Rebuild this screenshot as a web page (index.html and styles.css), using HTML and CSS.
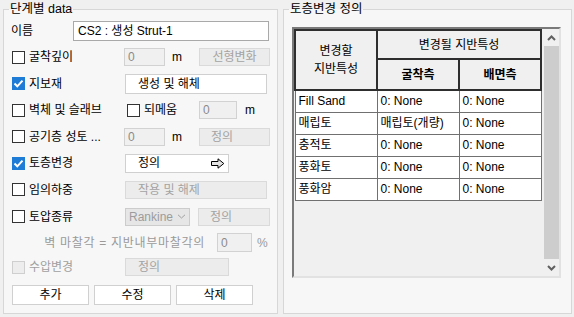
FILE: index.html
```html
<!DOCTYPE html>
<html lang="ko">
<head>
    <meta charset="UTF-8">
    <title>단계별 data</title>
    <link rel="stylesheet" href="styles.css">
</head>
<body>
    <div class="window">
        <fieldset class="group stage">
            <legend>단계별 data</legend>
            <div class="rows">
                <div class="row">
                    <span class="name-label">이름</span>
                    <span class="field name">CS2 : 생성 Strut-1</span>
                </div>
                <div class="row">
                    <span class="lead"><span class="check"></span>굴착깊이</span>
                    <span class="field off num">0</span>
                    <span class="unit">m</span>
                    <span class="btn off wide">선형변화</span>
                </div>
                <div class="row">
                    <span class="lead"><span class="check on"><svg viewBox="0 0 13 13"><polyline points="2.5,6.5 5.3,9.3 10.5,3.6"/></svg></span>지보재</span>
                    <span class="btn long tall left">생성 및 해체</span>
                </div>
                <div class="row">
                    <span class="lead"><span class="check"></span>벽체 및 슬래브</span>
                    <span class="lead2"><span class="check"></span>되메움</span>
                    <span class="field off small">0</span>
                    <span class="unit wide-gap">m</span>
                </div>
                <div class="row">
                    <span class="lead"><span class="check"></span>공기층 성토 ...</span>
                    <span class="field off num">0</span>
                    <span class="unit">m</span>
                    <span class="btn off wide left">정의</span>
                </div>
                <div class="row">
                    <span class="lead"><span class="check on"><svg viewBox="0 0 13 13"><polyline points="2.5,6.5 5.3,9.3 10.5,3.6"/></svg></span>토층변경</span>
                    <span class="btn mid left arrow-btn">정의
                        <svg class="arrow" viewBox="0 0 15 11"><path d="M1.5 3.5 H8 V0.8 L13.8 5.5 L8 10.2 V7.5 H1.5 Z"/></svg>
                    </span>
                </div>
                <div class="row">
                    <span class="lead"><span class="check"></span>임의하중</span>
                    <span class="btn off long left">작용 및 해제</span>
                </div>
                <div class="row">
                    <span class="lead"><span class="check"></span>토압종류</span>
                    <span class="select off">Rankine
                        <svg class="chev" viewBox="0 0 9 5"><polyline points="1,0.8 4.5,4 8,0.8"/></svg>
                    </span>
                    <span class="btn off wide left after-select">정의</span>
                </div>
                <div class="row">
                    <span class="note">벽 마찰각 = 지반내부마찰각의</span>
                    <span class="field off pct">0</span>
                    <span class="note-unit">%</span>
                </div>
                <div class="row">
                    <span class="lead dim"><span class="check off"></span>수압변경</span>
                    <span class="btn off mid left">정의</span>
                </div>
                <div class="row actions">
                    <span class="btn action">추가</span>
                    <span class="btn action">수정</span>
                    <span class="btn action">삭제</span>
                </div>
            </div>
        </fieldset>

        <fieldset class="group layer">
            <legend>토층변경 정의</legend>
            <div class="grid-box">
                <div class="grid-body">
                    <table class="layers">
                        <colgroup><col><col><col></colgroup>
                        <tr class="head1">
                            <th rowspan="2">변경할<br>지반특성</th>
                            <th colspan="2">변경될 지반특성</th>
                        </tr>
                        <tr class="head2">
                            <th class="bold">굴착측</th>
                            <th class="bold">배면측</th>
                        </tr>
                        <tr><td>Fill Sand</td><td>0: None</td><td>0: None</td></tr>
                        <tr><td>매립토</td><td>매립토(개량)</td><td>0: None</td></tr>
                        <tr><td>충적토</td><td>0: None</td><td>0: None</td></tr>
                        <tr><td>풍화토</td><td>0: None</td><td>0: None</td></tr>
                        <tr><td>풍화암</td><td>0: None</td><td>0: None</td></tr>
                    </table>
                </div>
                <div class="vscroll">
                    <span class="sb-arrow"><svg viewBox="0 0 9 6"><polyline points="1,5 4.5,1.5 8,5"/></svg></span>
                    <span class="sb-thumb"></span>
                    <span class="sb-arrow"><svg viewBox="0 0 9 6"><polyline points="1,1 4.5,4.5 8,1"/></svg></span>
                </div>
            </div>
        </fieldset>
    </div>
</body>
</html>
```

FILE: styles.css
```css
body {
    margin: 0;
    background: #f0f0f0;
    font-family: "Liberation Sans", "Noto Sans CJK KR", sans-serif;
    font-size: 12px;
    color: #000;
}

.window {
    display: flex;
    height: 317px;
}

.group {
    margin: 0;
    padding: 0 5px;
    height: 314px;
    box-sizing: border-box;
    border: 1px solid #d7d7d7;
    background: #f7f7f7;
    min-width: 0;
}

.group legend {
    padding: 0 1px;
    line-height: 18px;
    font-size: 12.5px;
}

.stage {
    margin-left: 3px;
    width: 275px;
}

.layer {
    margin-left: 5px;
    width: 289px;
}

/* left side form rows */
.rows {
    display: grid;
    grid-template-rows: 26px 26px 27px 26px 27px 26px 27px 27px 25px 24px 32px;
    padding-left: 3px;
}

.row {
    display: flex;
    align-items: center;
    line-height: 16px;
    white-space: nowrap;
}

.name-label {
    width: 62px;
    margin-left: -1px;
}

.lead {
    width: 112px;
    display: flex;
    align-items: center;
}

.lead2 {
    width: 72px;
    margin-left: 3px;
    display: flex;
    align-items: center;
}

.dim {
    color: #a0a0a0;
}

.check {
    width: 13px;
    height: 13px;
    box-sizing: border-box;
    border: 1px solid #333;
    background: #fff;
    margin-right: 4px;
    flex: none;
}

.check svg {
    display: block;
    width: 13px;
    height: 13px;
    margin: -1px;
}

.check svg polyline {
    fill: none;
    stroke: #fff;
    stroke-width: 2;
}

.check.on {
    border-color: #1e7bd6;
    background: #1e7bd6;
}

.check.off {
    border-color: #cfcfcf;
    background: #ededed;
}

.field {
    height: 20px;
    box-sizing: border-box;
    border: 1px solid #a9a9a9;
    background: #fff;
    padding: 0 4px;
    display: flex;
    align-items: center;
}

.field.name {
    width: 196px;
}

.field.off {
    height: 18px;
    border-color: #d2d2d2;
    background: #f0f0f0;
    color: #8a8a8a;
    padding: 0 3px;
}

.field.num {
    width: 41px;
}

.field.small {
    width: 38px;
}

.field.pct {
    width: 35px;
    height: 19px;
    margin-left: 12px;
}

.unit {
    width: 34px;
    padding-left: 7px;
    box-sizing: border-box;
}

.unit.wide-gap {
    padding-left: 8px;
}

.btn {
    height: 19px;
    box-sizing: border-box;
    border: 1px solid #d0d0d0;
    background: #fff;
    display: flex;
    align-items: center;
    justify-content: center;
}

.btn.left {
    justify-content: flex-start;
    padding-left: 12px;
}

.btn.off {
    height: 18px;
    border-color: #dadada;
    background: #ececec;
    color: #a3a3a3;
}

.btn.wide {
    width: 71px;
}

.btn.wide.left {
    padding-left: 11px;
}

.btn.long {
    width: 142px;
    margin-left: 1px;
}

.btn.tall {
    height: 20px;
}

.btn.mid {
    width: 104px;
    margin-left: 1px;
}

.btn.after-select {
    width: 72px;
    margin-left: 8px;
}

.arrow-btn {
    padding-right: 3px;
}

.arrow {
    width: 15px;
    height: 11px;
    margin-left: auto;
}

.arrow path {
    fill: #e4e4e4;
    stroke: #000;
    stroke-width: 1;
}

.select {
    width: 65px;
    height: 18px;
    margin-left: 1px;
    box-sizing: border-box;
    border: 1px solid #cccccc;
    background: #e6e6e6;
    color: #9c9c9c;
    display: flex;
    align-items: center;
    padding-left: 3px;
}

.chev {
    width: 9px;
    height: 5px;
    margin-left: 4px;
}

.chev polyline {
    fill: none;
    stroke: #a0a0a0;
    stroke-width: 1;
}

.note {
    width: 193px;
    text-align: right;
    color: #9a9a9a;
    letter-spacing: 0.7px;
}

.note-unit {
    margin-left: 5px;
    color: #9a9a9a;
}

.actions {
    gap: 5px;
}

.btn.action {
    width: 77px;
    height: 20px;
}

/* right side grid */
.grid-box {
    margin: 9px 0 0 3px;
    width: 269px;
    height: 251px;
    box-sizing: border-box;
    border: 2px solid;
    border-color: #7a7a7a #e2e2e2 #e2e2e2 #7a7a7a;
    background: #f0f0f0;
    display: flex;
}

.grid-body {
    flex: 1;
}

.layers {
    border-collapse: collapse;
    table-layout: fixed;
    width: 246px;
    line-height: 15px;
}

.layers col {
    width: 82px;
}

.layers th {
    background: #f0f0f0;
    border: 2px solid #2e2e2e;
    font-weight: normal;
    text-align: center;
    padding: 0;
    line-height: 18px;
}

.layers th.bold {
    font-weight: bold;
}

.layers .head1 {
    height: 29px;
}

.layers .head2 {
    height: 31px;
}

.layers td {
    background: #fff;
    border: 1px solid #707070;
    height: 21px;
    padding: 0 3px;
    white-space: nowrap;
    overflow: hidden;
}

.vscroll {
    width: 17px;
    display: flex;
    flex-direction: column;
    padding-left: 2px;
    box-sizing: border-box;
}

.sb-arrow {
    height: 17px;
    display: flex;
    align-items: center;
    justify-content: center;
}

.sb-arrow svg {
    width: 9px;
    height: 6px;
}

.sb-arrow polyline {
    fill: none;
    stroke: #606060;
    stroke-width: 2;
}

.sb-thumb {
    flex: 1;
    background: #cdcdcd;
}
```
